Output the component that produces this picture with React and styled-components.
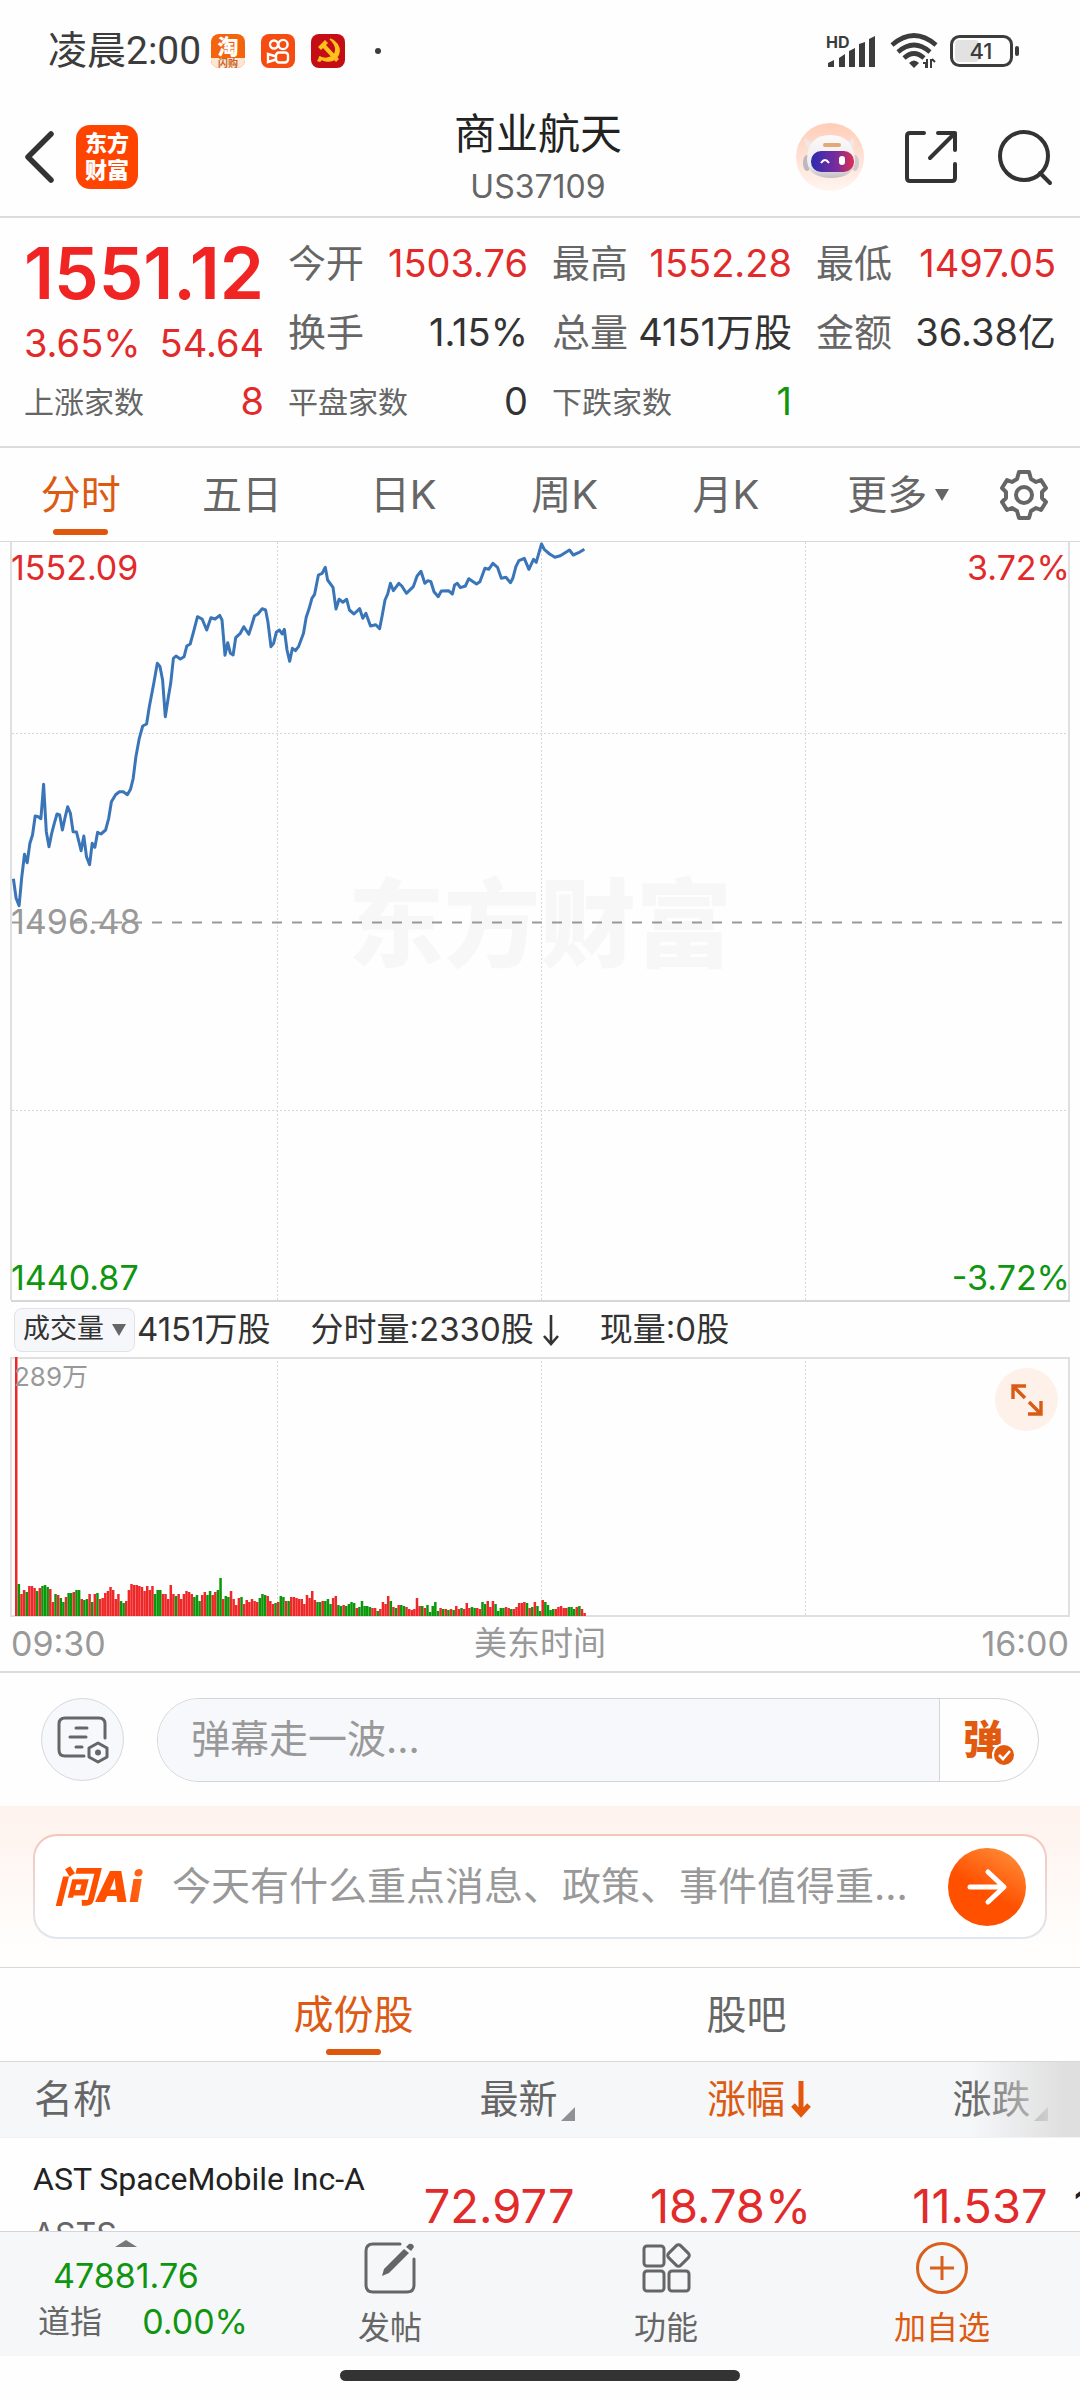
import React from "react";
import styled, { createGlobalStyle } from "styled-components";

const RED = "#e22a2a";
const GREEN = "#109510";
const ORANGE = "#dd5a12";

const Global = createGlobalStyle`
  * { box-sizing: border-box; }
  body { margin: 0; background: #fdfdfd; color: #333; font-family: "Inter", "Noto Sans CJK SC", sans-serif; line-height: 1.2; }
  button, input, select { font: inherit; color: inherit; background: none; border: 0; padding: 0; margin: 0; outline: none; }
  a { color: inherit; text-decoration: none; }
  svg { display: block; flex: none; overflow: visible; }
`;

const Page = styled.div`
  height: 100vh;
  display: flex;
  flex-direction: column;
  overflow: hidden;
  background: #fefefe;
`;

/* status bar */
const StatusBar = styled.div`
  flex: none;
  height: 102px;
  padding: 0 60px 0 48px;
  display: flex;
  align-items: center;
  justify-content: space-between;
  font-size: 39px;
  color: #3c3c3c;
`;
const StatusSide = styled.div`
  display: flex;
  align-items: center;
  gap: ${(p) => p.$gap}px;
`;
const Clock = styled.span`
  margin-right: -6px;
  font-family: "Roboto", "Noto Sans CJK SC", sans-serif;
`;
const Dot = styled.i`
  width: 6px;
  height: 6px;
  margin-left: 14px;
  border-radius: 50%;
  background: #3c3c3c;
`;

/* navigation */
const NavBar = styled.header`
  flex: none;
  height: 116px;
  padding: 0 28px 8px 24px;
  display: grid;
  grid-template-columns: 1fr auto 1fr;
  align-items: center;
  border-bottom: 2px solid #dcdcdc;
`;
const NavSide = styled.div`
  display: flex;
  align-items: center;
  gap: ${(p) => p.$gap}px;
  justify-content: ${(p) => (p.$end ? "flex-end" : "flex-start")};
`;
const IconButton = styled.button`
  display: flex;
  align-items: center;
  justify-content: center;
`;
const Logo = styled.a`
  width: 62px;
  height: 64px;
  border-radius: 14px;
  background: #ff4400;
  color: #fff;
  font-size: 22px;
  line-height: 27px;
  font-weight: 900;
  display: flex;
  align-items: center;
  justify-content: center;
  text-align: center;
`;
const TitleBlock = styled.div`
  text-align: center;
  padding-top: 4px;
`;
const Title = styled.h1`
  margin: 0;
  font-size: 42px;
  line-height: 56px;
  font-weight: 400;
  color: #222;
`;
const Code = styled.div`
  font-size: 32px;
  line-height: 50px;
  color: #666;
`;

/* quote */
const Quote = styled.section`
  flex: none;
  display: grid;
  grid-template-columns: repeat(4, minmax(0, 1fr));
  grid-auto-rows: 69px;
  column-gap: 24px;
  padding: 11px 24px 10px;
  border-bottom: 2px solid #dcdcdc;
`;
const Main = styled.div`
  grid-row: span 2;
  display: flex;
  flex-direction: column;
  color: ${RED};
`;
const Price = styled.div`
  font-size: 71px;
  line-height: 88px;
  font-weight: 600;
  color: #f12424;
  white-space: nowrap;
`;
const Change = styled.div`
  display: flex;
  justify-content: space-between;
  font-size: 38px;
  line-height: 52px;
`;
const Stat = styled.div`
  display: flex;
  align-items: center;
  justify-content: space-between;
  white-space: nowrap;
`;
const StatLabel = styled.span`
  font-size: ${(p) => (p.$small ? 30 : 38)}px;
  color: #666;
`;
const StatValue = styled.span`
  font-size: 38px;
  color: ${(p) => p.$color || "#333"};
`;

/* tabs */
const TabBar = styled.nav`
  flex: none;
  display: flex;
  height: 94px;
  border-bottom: 1px solid #d8d8d8;
  padding: ${(p) => (p.$inset ? "0 137px 0 157px" : "0")};
`;
const Tabs = styled.div`
  flex: 1;
  display: grid;
  grid-auto-flow: column;
  grid-auto-columns: minmax(0, 1fr);
`;
const Tab = styled.button`
  position: relative;
  display: flex;
  align-items: center;
  justify-content: center;
  gap: 8px;
  padding-left: ${(p) => (p.$menu ? 22 : 0)}px;
  font-size: 40px;
  color: ${(p) => (p.$active ? ORANGE : "#666")};
  &::after {
    content: "";
    display: ${(p) => (p.$active ? "block" : "none")};
    position: absolute;
    bottom: 6px;
    left: calc(50% - 28px);
    width: 55px;
    height: 6px;
    border-radius: 3px;
    background: #df560c;
  }
`;
const Gear = styled(IconButton)`
  width: 112px;
`;

/* charts */
const Chart = styled.div`
  flex: none;
  position: relative;
`;
const Plot = styled.svg`
  position: relative;
  width: 100%;
  height: auto;
`;
const ChartLabel = styled.span`
  position: absolute;
  font-size: ${(p) => p.$size || 34}px;
  line-height: 44px;
  color: ${(p) => p.$color || "#999"};
  ${(p) => p.$pos}
`;
const Watermark = styled.span`
  position: absolute;
  left: 0;
  right: 0;
  top: 43%;
  text-align: center;
  font-size: 96px;
  line-height: 110px;
  font-weight: 900;
  color: #f7f7f7;
`;
const Expand = styled.button`
  position: absolute;
  top: 11px;
  right: 22px;
  width: 63px;
  height: 63px;
  border-radius: 50%;
  background: #fdf1ea;
  display: flex;
  align-items: center;
  justify-content: center;
`;
const VolumeHead = styled.div`
  flex: none;
  height: 55px;
  padding-left: 14px;
  display: flex;
  align-items: center;
  font-size: 33px;
  color: #333;
  white-space: nowrap;
`;
const SelectBox = styled.label`
  display: flex;
  align-items: center;
  width: 121px;
  height: 44px;
  margin-right: 2px;
  padding: 0 8px;
  border: 1px solid #e0e2e5;
  border-radius: 8px;
  background: #f6f7fa;
  font-size: 27px;
`;
const Select = styled.select`
  appearance: none;
  flex: 1;
  min-width: 0;
  height: 42px;
`;
const VolumeText = styled.span`
  display: flex;
  align-items: center;
  gap: 8px;
  margin-right: 40px;
`;
const Axis = styled.div`
  flex: none;
  display: grid;
  grid-template-columns: 1fr auto 1fr;
  align-items: center;
  height: 56px;
  padding: 0 11px;
  border-bottom: 2px solid #dcdcdc;
  color: #999;
`;
const AxisText = styled.span`
  text-align: ${(p) => p.$align};
  font-size: ${(p) => (p.$align === "center" ? 33 : 34)}px;
`;

/* comment line */
const Danmaku = styled.div`
  flex: none;
  display: flex;
  align-items: center;
  gap: 33px;
  height: 133px;
  padding: 0 41px;
`;
const Round = styled.button`
  width: 83px;
  height: 83px;
  border-radius: 50%;
  border: 1px solid #d6d8dc;
  background: #f7f8fb;
  display: flex;
  align-items: center;
  justify-content: center;
`;
const Pill = styled.div`
  flex: 1;
  display: flex;
  height: 84px;
  border: 1px solid #d3d5d8;
  border-radius: 42px;
  overflow: hidden;
`;
const PillInput = styled.input`
  flex: 1;
  min-width: 0;
  padding-left: 33px;
  font-size: 39px;
  background: #f7f8fb;
  border-right: 1px solid #d3d5d8;
  &::placeholder { color: #999; opacity: 1; }
`;
const PillButton = styled.button`
  position: relative;
  width: 98px;
  padding-right: 12px;
  font-size: 40px;
  font-weight: 900;
  color: #e25a10;
  svg { position: absolute; left: 52px; top: 44px; }
`;

/* AI prompt */
const AiSection = styled.section`
  flex: none;
  padding: 28px 33px;
  background: linear-gradient(#fef2ed, #fffefd 90%);
  border-bottom: 1px solid #d8d8d8;
`;
const AiCard = styled.form`
  display: flex;
  align-items: center;
  height: 105px;
  padding: 0 19px;
  border: 2px solid transparent;
  border-radius: 24px;
  background: linear-gradient(#fff, #fff) padding-box, linear-gradient(#f5c6ba, #e0e7ee) border-box;
`;
const AiMark = styled.span`
  width: 118px;
  font-size: 42px;
  line-height: 60px;
  font-weight: 900;
  font-style: italic;
  color: transparent;
  background: linear-gradient(90deg, #ff5000 60%, #ff8a50) text;
`;
const AiInput = styled.input`
  flex: 1;
  min-width: 0;
  font-size: 39px;
  &::placeholder { color: #999; opacity: 1; }
`;
const Send = styled.button`
  width: 78px;
  height: 78px;
  border-radius: 50%;
  background: linear-gradient(30deg, #ff5000 45%, #ff9540);
  display: flex;
  align-items: center;
  justify-content: center;
`;

/* table */
const List = styled.div`
  flex: 1;
  min-height: 0;
  overflow: hidden;
  position: relative;
`;
const Table = styled.table`
  width: 100%;
  table-layout: fixed;
  border-collapse: collapse;
`;
const Head = styled.th`
  height: 75px;
  padding: 0 0 0 ${(p) => (p.$first ? 34 : 0)}px;
  background: #f6f7f9;
  border-bottom: 1px solid #f1f2f4;
  font-size: 39px;
  font-weight: 400;
  text-align: left;
  color: ${(p) => (p.$active ? ORANGE : "#666")};
  width: ${(p) => p.$width};
`;
const Sort = styled.button`
  display: flex;
  align-items: ${(p) => (p.$center ? "center" : "flex-end")};
  justify-content: flex-end;
  gap: ${(p) => (p.$center ? 6 : 3)}px;
  width: 100%;
`;
const Fade = styled.div`
  position: absolute;
  top: 0;
  right: 0;
  width: 110px;
  height: 75px;
  background: linear-gradient(90deg, rgba(247, 247, 247, 0), rgba(222, 222, 222, 0.95) 85%);
`;
const NameCell = styled.td`
  padding: 0 0 0 33px;
  height: 138px;
  white-space: nowrap;
`;
const Name = styled.div`
  font-family: "Roboto", sans-serif;
  font-size: 32px;
  line-height: 58px;
  color: #222;
`;
const Ticker = styled.div`
  font-size: 32px;
  line-height: 54px;
  color: #666;
`;
const Cell = styled.td`
  padding: 0 0 0 ${(p) => (p.$next ? 26 : 0)}px;
  font-size: 47px;
  line-height: 48px;
  text-align: ${(p) => (p.$next ? "left" : "right")};
  color: ${(p) => (p.$next ? "#222" : RED)};
  white-space: nowrap;
`;

/* bottom */
const BottomBar = styled.footer`
  flex: none;
  display: flex;
  height: 125px;
  background: #f6f7f9;
  border-top: 1px solid #d3d5d8;
`;
const Index = styled.a`
  position: relative;
  width: 252px;
  padding: 21px 4px 0 38px;
  font-size: 34px;
  line-height: 46px;
  color: ${GREEN};
  svg { position: absolute; left: 115px; top: 8px; }
`;
const IndexPrice = styled.div`
  padding-left: 15px;
`;
const IndexRow = styled.div`
  display: flex;
  justify-content: space-between;
`;
const IndexName = styled.span`
  font-size: 32px;
  color: #666;
`;
const Action = styled.button`
  flex: 1;
  display: flex;
  flex-direction: column;
  align-items: center;
  padding-top: 10px;
  gap: 10px;
  font-size: 32px;
  line-height: 48px;
  color: ${(p) => (p.$active ? ORANGE : "#666")};
`;
const HomeArea = styled.div`
  flex: none;
  height: 44px;
  padding-top: 14px;
  display: flex;
  justify-content: center;
`;
const HomeBar = styled.div`
  width: 400px;
  height: 11px;
  border-radius: 6px;
  background: #333;
`;

const Down = () => (
  <svg width="14" height="12" viewBox="0 0 14 12"><path d="M0 0H14L7 12Z" fill="#666" /></svg>
);
const Corner = () => (
  <svg width="14" height="20" viewBox="0 0 14 20"><path d="M14 4V18H0Z" fill="#909194" /></svg>
);

/* price samples: [x, y] in plot units */
const PRICE = [
  [35,1046],[42,1105],[50,1127],[57,1040],[64,973],[71,998],[78,940],[85,915],[92,858],[100,860],[107,866],[114,763],[121,905],[128,950],[135,910],[142,880],[149,852],[156,855],[163,900],[170,862],[177,830],[184,850],[191,905],[200,906],[212,962],[219,918],[226,980],[234,1004],[241,940],[248,952],[255,907],[264,912],[276,900],[284,865],[291,815],[302,794],[312,785],[322,785],[333,794],[341,778],[348,745],[355,680],[364,625],[373,588],[383,582],[390,530],[402,460],[411,400],[418,410],[425,450],[432,560],[440,500],[446,460],[453,385],[460,378],[471,387],[481,380],[488,348],[497,342],[506,305],[516,260],[528,267],[540,300],[551,263],[562,267],[574,256],[580,270],[588,376],[595,338],[602,370],[609,375],[616,323],[628,310],[637,290],[650,313],[658,285],[665,258],[674,252],[685,236],[694,240],[700,275],[708,350],[715,340],[722,307],[730,300],[737,312],[743,298],[750,360],[757,394],[764,355],[772,362],[780,350],[793,310],[800,262],[808,235],[815,205],[822,193],[832,135],[842,130],[850,112],[856,150],[870,172],[878,237],[886,208],[896,217],[906,208],[913,240],[925,252],[940,236],[948,265],[956,250],[968,288],[982,284],[992,296],[999,255],[1006,210],[1013,192],[1020,160],[1028,182],[1042,160],[1050,168],[1062,190],[1080,170],[1090,138],[1100,124],[1110,160],[1118,152],[1126,155],[1134,185],[1145,200],[1153,183],[1172,182],[1182,192],[1188,165],[1195,160],[1203,173],[1216,168],[1225,146],[1245,162],[1254,155],[1267,115],[1277,118],[1288,100],[1300,112],[1310,145],[1322,142],[1334,158],[1340,145],[1348,110],[1356,92],[1370,85],[1382,118],[1394,88],[1401,97],[1408,70],[1415,42],[1422,58],[1436,72],[1450,82],[1464,77],[1488,60],[1498,75],[1512,68],[1527,58],
];
const pricePoints = PRICE.map(([x, y]) => `${(x / 2.613).toFixed(1)},${(y / 3 - 12).toFixed(1)}`).join(" ");

/* volume samples: direction and bar height */
const VOLUME = `r259 g32 r22 r26 g24 r30 r30 r28 g25 r28 g30 g31 g29 r27 r14 g22 r21 g18 g14 r19 g23 g23 r24 g26 g26 r17 g16 g17 r22 g14 r22 g23 r17 r18 r23 r25 r29 r26 r17 r22 g15 g13 r15 r26 r32 r31 r31 r30 r29 r25 r30 r26 r30 g22 g26 g26 r22 r22 r17 r31 r22 g20 r22 r17 r22 r25 r24 r22 g19 g21 g15 r21 r24 g21 g25 r21 r24 g26 g38 r17 g20 g19 r25 r17 r11 r18 g19 r12 r16 r14 r17 r15 r14 g18 g22 g21 r20 r15 r12 g13 r14 g20 g19 r15 g15 r19 r19 r18 r17 r17 r12 r21 r18 r25 r16 g14 g14 r15 g15 g17 g12 r18 r20 g11 g10 r11 g10 g12 g14 g13 r8 g9 g15 g10 g10 g9 r8 r8 g5 r7 r14 r12 r20 g15 r9 g8 r11 g11 g10 r9 r7 r6 r7 r18 r10 g10 r8 g11 g4 g10 g14 g5 r8 g7 r7 g6 r7 g6 r10 r7 g8 r7 r13 r8 g9 g8 r8 r7 g14 g12 r15 r9 r15 g12 g5 g8 g8 r9 r8 g7 r7 r9 r13 r13 r14 g13 r8 g9 r14 g10 g5 r16 g14 g11 g6 g7 r7 r9 r10 r8 r8 g9 g9 g7 r9 g10 r7 r3`
  .split(" ")
  .map((s) => ({ color: s[0] === "r" ? "#ee2828" : "#0c960c", h: Number(s.slice(1)) }));
const BAR_STEP = 571 / VOLUME.length;

const STATS = [
  ["今开", "1503.76", RED],
  ["最高", "1552.28", RED],
  ["最低", "1497.05", RED],
  ["换手", "1.15%"],
  ["总量", "4151万股"],
  ["金额", "36.38亿"],
  ["上涨家数", "8", RED],
  ["平盘家数", "0"],
  ["下跌家数", "1", GREEN],
];

export default function App() {
  return (
    <Page>
      <Global />
      <StatusBar>
        <StatusSide $gap={16}>
          <Clock>凌晨2:00</Clock>
          <svg width="34" height="34" viewBox="0 0 34 34">
            <defs><clipPath id="tb"><rect width="34" height="34" rx="8" /></clipPath></defs>
            <g clipPath="url(#tb)">
              <rect width="34" height="34" fill="#f3640c" />
              <rect y="24" width="34" height="10" fill="#fde6d4" />
            </g>
            <text x="17" y="20" textAnchor="middle" fontSize="21" fontWeight="900" fill="#fff">淘</text>
            <text x="17" y="33" textAnchor="middle" fontSize="10" fontWeight="700" fill="#c9621f">闪购</text>
          </svg>
          <svg width="34" height="34" viewBox="0 0 34 34">
            <rect width="34" height="34" rx="8" fill="#f64c12" />
            <g fill="none" stroke="#fff" strokeWidth="2.4">
              <circle cx="13" cy="10.5" r="4" /><circle cx="22" cy="10.5" r="4.6" />
              <rect x="15" y="18.5" width="12" height="10" rx="3" /><path d="M15 22.5L7 20V28L15 25.5" />
            </g>
          </svg>
          <svg width="34" height="34" viewBox="0 0 34 34">
            <rect width="34" height="34" rx="8" fill="#c40d14" />
            <path d="M19 5C32 9 31 27 17 27C12 27 10 25 8 23C11 24 14 25 17 24C27 22 27 12 19 5Z" fill="#ffc21c" stroke="#ffc21c" strokeWidth="1.4" />
            <path d="M7 13L14 6L17 9L15 11L28 25L25 28L12 14L10 16Z M9 22L6 27L9 28L12 25Z" fill="#ffc21c" />
          </svg>
          <Dot />
        </StatusSide>
        <StatusSide $gap={12}>
          <svg width="52" height="34" viewBox="0 0 52 34" fill="#3c3c3c">
            <text x="0" y="14" fontSize="16" fontWeight="700">HD</text>
            <path d="M2 33V29L8 26V33ZM13 33V24L19 20V33ZM23 33V17L29 14V33ZM33 33V10L39 8V33ZM43 33V5L49 2V33Z" />
          </svg>
          <svg width="48" height="36" viewBox="0 0 48 36" fill="none" stroke="#3c3c3c" strokeWidth="4.6">
            <path d="M2 12Q24 -7 46 12M8 19Q24 5 40 19M14 25Q24 16 34 25" />
            <path d="M19 30Q24 25 29 30L24 35Z" fill="#3c3c3c" stroke="none" />
            <path d="M33 30H36V35M37 26V35M41 35V26M42 26L45 29" strokeWidth="2" />
          </svg>
          <svg width="70" height="32" viewBox="0 0 70 32">
            <rect x="5" y="5" width="24" height="22" rx="4" fill="#e2e2e2" />
            <rect x="1.5" y="1.5" width="60" height="29" rx="8" fill="none" stroke="#3c3c3c" strokeWidth="3" />
            <rect x="65" y="11" width="4" height="10" rx="2" fill="#3c3c3c" />
            <text x="31" y="24" textAnchor="middle" fontSize="22" fontWeight="500" fill="#3c3c3c">41</text>
          </svg>
        </StatusSide>
      </StatusBar>

      <NavBar>
        <NavSide $gap={22}>
          <IconButton aria-label="返回">
            <svg width="30" height="52" viewBox="0 0 30 52" fill="none" stroke="#333" strokeWidth="5.5" strokeLinecap="round" strokeLinejoin="round"><path d="M27 3L4 26L27 49" /></svg>
          </IconButton>
          <Logo href="#">东方<br />财富</Logo>
        </NavSide>
        <TitleBlock>
          <Title>商业航天</Title>
          <Code>US37109</Code>
        </TitleBlock>
        <NavSide $gap={40} $end>
          <IconButton aria-label="助手">
            <svg width="68" height="68" viewBox="0 0 68 68">
              <defs>
                <linearGradient id="bg" x2="0" y2="1"><stop stopColor="#ffcdb8" /><stop offset="1" stopColor="#fff5f0" /></linearGradient>
                <linearGradient id="vis"><stop stopColor="#2c2bb0" /><stop offset=".6" stopColor="#7a2c9c" /><stop offset="1" stopColor="#e0304e" /></linearGradient>
                <linearGradient id="hd" x2="0" y2="1"><stop stopColor="#fbf9fa" /><stop offset=".7" stopColor="#efebee" /><stop offset="1" stopColor="#c2bdc4" /></linearGradient>
              </defs>
              <circle cx="34" cy="34" r="34" fill="url(#bg)" />
              <path d="M9 14Q8 24 14 26L18 19Q12 20 9 14ZM57 14Q60 24 54 27L49 19Q54 20 57 14Z" fill="#f0e8e8" />
              <ellipse cx="11" cy="40" rx="4" ry="8" fill="#bdb7c0" /><ellipse cx="59" cy="40" rx="4" ry="8" fill="#d0cad0" />
              <path d="M11 36Q12 12 34 12Q57 12 59 36Q60 54 36 55Q11 55 11 36Z" fill="url(#hd)" />
              <rect x="27" y="20" width="18" height="4" rx="2" fill="#e2a878" />
              <rect x="15" y="28" width="43" height="21" rx="10" fill="url(#vis)" />
              <path d="M25 40Q29 34 33 40" fill="none" stroke="#fff" strokeWidth="2" /><rect x="43" y="33" width="6" height="9" rx="3" fill="#fff" />
            </svg>
          </IconButton>
          <IconButton aria-label="分享">
            <svg width="54" height="54" viewBox="0 0 54 54" fill="none" stroke="#333" strokeWidth="4" strokeLinecap="round" strokeLinejoin="round">
              <path d="M20 3H6Q3 3 3 6V48Q3 51 6 51H48Q51 51 51 48V34M34 3H51V20M51 3L26 28" />
            </svg>
          </IconButton>
          <IconButton aria-label="搜索">
            <svg width="54" height="54" viewBox="0 0 54 54" fill="none" stroke="#333" strokeWidth="4" strokeLinecap="round">
              <circle cx="26" cy="26" r="24" /><path d="M42 43L52 53" />
            </svg>
          </IconButton>
        </NavSide>
      </NavBar>

      <Quote>
        <Main>
          <Price>1551.12</Price>
          <Change><span>3.65%</span><span>54.64</span></Change>
        </Main>
        {STATS.map(([label, value, color]) => (
          <Stat key={label}>
            <StatLabel $small={label.length > 2}>{label}</StatLabel>
            <StatValue $color={color}>{value}</StatValue>
          </Stat>
        ))}
      </Quote>

      <TabBar>
        <Tabs>
          {["分时", "五日", "日K", "周K", "月K"].map((t, i) => (
            <Tab key={t} $active={i === 0}>{t}</Tab>
          ))}
          <Tab $menu>更多<Down /></Tab>
        </Tabs>
        <Gear aria-label="设置">
          <svg width="48" height="50" viewBox="0 0 48 50" fill="none" stroke="#666" strokeWidth="4" strokeLinejoin="round">
            <path d="M19 2H29L31 9L36 12L41 10L46 18L42 22V28L46 32L41 40L36 38L31 41L29 48H19L17 41L12 38L7 40L2 32L6 28V22L2 18L7 10L12 12L17 9Z" />
            <circle cx="24" cy="25" r="8" />
          </svg>
        </Gear>
      </TabBar>

      <Chart>
        <Watermark>东方财富</Watermark>
        <Plot viewBox="0 0 1080 760">
          <g stroke="#d6d6d6" strokeDasharray="2 2">
            <path d="M277.5 0V758M541.5 0V758M805.5 0V758M12 191.5H1068M12 568.5H1068" />
          </g>
          <path d="M11 0V758M1069 0V758" stroke="#e0e0e0" strokeWidth="2" />
          <path d="M11 759H1070" stroke="#d6d6d6" strokeWidth="2" />
          <path d="M12 380.5H1062" stroke="#999" strokeWidth="2" strokeDasharray="10 10" />
          <polyline points={pricePoints} fill="none" stroke="#3a75b8" strokeWidth="3" strokeLinejoin="round" />
        </Plot>
        <ChartLabel $color={RED} $pos="left: 11px; top: 4px;">1552.09</ChartLabel>
        <ChartLabel $color={RED} $pos="right: 10px; top: 4px;">3.72%</ChartLabel>
        <ChartLabel $pos="left: 11px; top: calc(50% - 22px);">1496.48</ChartLabel>
        <ChartLabel $color={GREEN} $pos="left: 11px; bottom: 2px;">1440.87</ChartLabel>
        <ChartLabel $color={GREEN} $pos="right: 10px; bottom: 2px;">-3.72%</ChartLabel>
      </Chart>

      <VolumeHead>
        <SelectBox>
          <Select aria-label="指标"><option>成交量</option></Select>
          <Down />
        </SelectBox>
        <VolumeText>4151万股</VolumeText>
        <VolumeText>
          分时量:2330股
          <svg width="18" height="32" viewBox="0 0 18 32" fill="none" stroke="#333" strokeWidth="2.6"><path d="M9 1V30M2 22L9 30L16 22" /></svg>
        </VolumeText>
        <VolumeText>现量:0股</VolumeText>
      </VolumeHead>

      <Chart>
        <Plot viewBox="0 0 1080 260">
          <path d="M277.5 0V259M541.5 0V259M805.5 0V259" stroke="#d6d6d6" strokeDasharray="2 2" />
          <path d="M11 1H1069V259H11Z" fill="none" stroke="#e0e0e0" strokeWidth="2" />
          {VOLUME.map((v, i) => (
            <rect key={i} x={15 + i * BAR_STEP} y={259 - v.h} width="2.5" height={v.h} fill={v.color} />
          ))}
        </Plot>
        <ChartLabel $size={26} $pos="left: 14px; top: -2px;">289万</ChartLabel>
        <Expand aria-label="全屏">
          <svg width="32" height="32" viewBox="0 0 32 32" fill="none" stroke="#d95c16" strokeWidth="3.4">
            <path d="M2 15V2H15M2 2L14 14M30 17V30H17M30 30L18 18" />
          </svg>
        </Expand>
      </Chart>
      <Axis>
        <AxisText $align="left">09:30</AxisText>
        <AxisText $align="center">美东时间</AxisText>
        <AxisText $align="right">16:00</AxisText>
      </Axis>

      <Danmaku>
        <Round aria-label="弹幕设置">
          <svg width="52" height="48" viewBox="0 0 52 48" fill="none" stroke="#666" strokeWidth="3" strokeLinecap="round">
            <path d="M27 40H8Q2 40 2 34V8Q2 2 8 2H42Q48 2 48 8V22M19 12H30M13 21H29M19 31H25" />
            <path d="M41 27L50 32V41L41 46L32 41V32Z" strokeLinejoin="round" /><circle cx="41" cy="36.5" r="3" fill="#666" stroke="none" />
          </svg>
        </Round>
        <Pill>
          <PillInput aria-label="弹幕" placeholder="弹幕走一波..." />
          <PillButton>
            弹
            <svg width="24" height="24" viewBox="0 0 24 24">
              <circle cx="12" cy="12" r="11" fill="#e25a10" stroke="#fff" strokeWidth="2" />
              <path d="M7 12L11 16L18 8" fill="none" stroke="#fff" strokeWidth="2.6" />
            </svg>
          </PillButton>
        </Pill>
      </Danmaku>

      <AiSection>
        <AiCard>
          <AiMark>问Ai</AiMark>
          <AiInput aria-label="问Ai" placeholder="今天有什么重点消息、政策、事件值得重..." />
          <Send type="button" aria-label="发送">
            <svg width="40" height="36" viewBox="0 0 40 36" fill="none" stroke="#fff" strokeWidth="5" strokeLinecap="round" strokeLinejoin="round"><path d="M3 18H36M21 3L37 18L21 33" /></svg>
          </Send>
        </AiCard>
      </AiSection>

      <TabBar $inset>
        <Tabs>
          <Tab $active>成份股</Tab>
          <Tab>股吧</Tab>
        </Tabs>
      </TabBar>

      <List>
        <Table>
          <thead>
            <tr>
              <Head $first $width="31.3%">名称</Head>
              <Head $width="21.9%"><Sort>最新<Corner /></Sort></Head>
              <Head $width="21.9%" $active>
                <Sort $center>涨幅
                  <svg width="20" height="40" viewBox="0 0 20 40" fill="none" stroke="#e3580a" strokeWidth="5"><path d="M10 2V34M2 26L10 35L18 26" /></svg>
                </Sort>
              </Head>
              <Head $width="21.9%"><Sort>涨跌<Corner /></Sort></Head>
              <Head />
            </tr>
          </thead>
          <tbody>
            <tr>
              <NameCell><Name>AST SpaceMobile Inc-A</Name><Ticker>ASTS</Ticker></NameCell>
              <Cell>72.977</Cell>
              <Cell>18.78%</Cell>
              <Cell>11.537</Cell>
              <Cell $next>1</Cell>
            </tr>
          </tbody>
        </Table>
        <Fade />
      </List>

      <BottomBar>
        <Index href="#">
          <svg width="22" height="7" viewBox="0 0 22 7"><path d="M0 7L11 0L22 7Z" fill="#777" /></svg>
          <IndexPrice>47881.76</IndexPrice>
          <IndexRow><IndexName>道指</IndexName><span>0.00%</span></IndexRow>
        </Index>
        <Action>
          <svg width="52" height="52" viewBox="0 0 52 52" fill="none" stroke="#666" strokeWidth="3">
            <path d="M36 2H9Q2 2 2 9V43Q2 50 9 50H43Q50 50 50 43V17" strokeLinecap="round" />
            <path d="M18 34L20 27L40 7L45 11L25 31Z M42 5L45 2Q49 1 50 5L47 9Z" fill="#666" stroke="none" />
          </svg>
          发帖
        </Action>
        <Action>
          <svg width="50" height="52" viewBox="0 0 50 52" fill="none" stroke="#666" strokeWidth="3">
            <rect x="3" y="4" width="20" height="20" rx="3" /><rect x="3" y="29" width="20" height="20" rx="3" /><rect x="28" y="29" width="20" height="20" rx="3" />
            <rect x="29" y="5" width="17" height="17" rx="3" transform="rotate(45 37.5 13.5)" />
          </svg>
          功能
        </Action>
        <Action $active>
          <svg width="52" height="52" viewBox="0 0 52 52" fill="none" stroke="#d9601c" strokeWidth="3">
            <circle cx="26" cy="26" r="24.5" /><path d="M26 14V38M14 26H38" />
          </svg>
          加自选
        </Action>
      </BottomBar>
      <HomeArea><HomeBar /></HomeArea>
    </Page>
  );
}
